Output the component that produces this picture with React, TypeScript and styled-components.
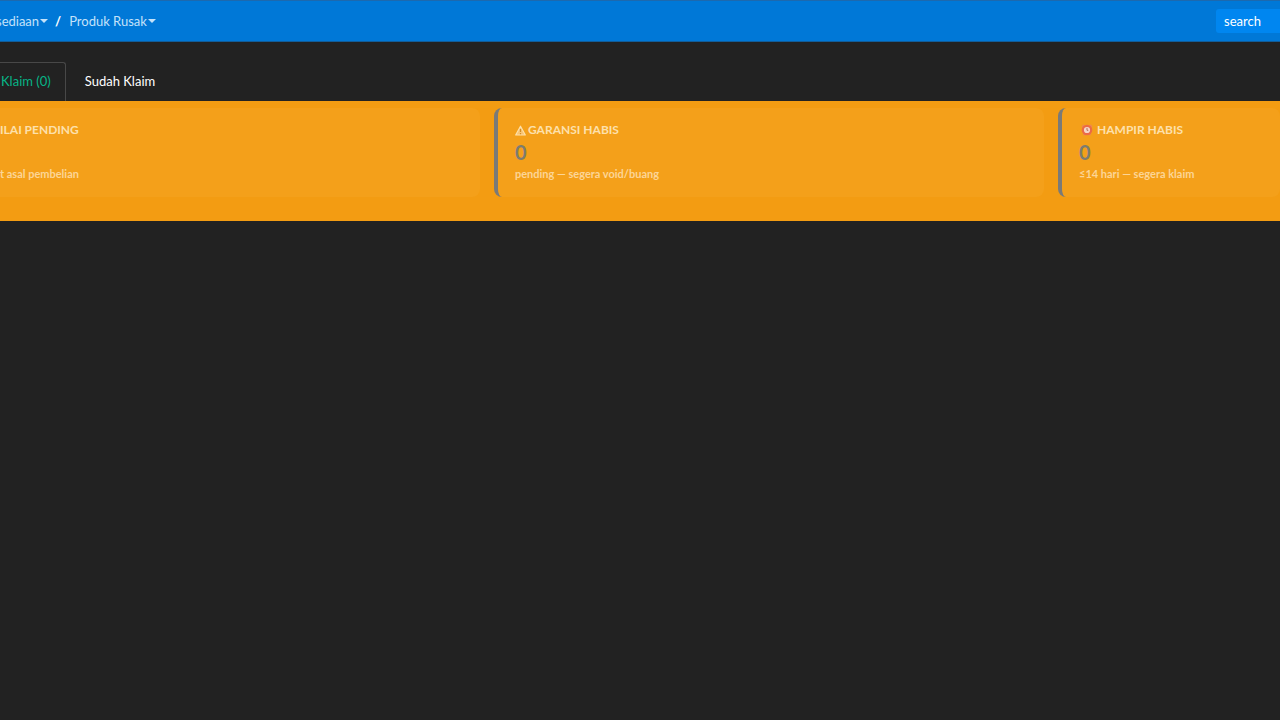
import React from "react";
import styled, { createGlobalStyle } from "styled-components";

const GlobalStyle = createGlobalStyle`
  *, *::before, *::after { box-sizing: border-box; }
  body {
    margin: 0;
    background: #222222;
    color: #ffffff;
    font-family: Lato, "Liberation Sans", sans-serif;
    font-size: 13px;
    line-height: 20px;
    overflow-x: hidden;
  }
`;

const Navbar = styled.header`
  display: flex;
  align-items: center;
  justify-content: space-between;
  height: 42px;
  background: #0078d7;
  border-top: 1px solid #1d69ae;
  border-bottom: 1px solid #125d99;
  overflow: hidden;
`;

const Breadcrumb = styled.nav`
  display: flex;
  align-items: center;
  gap: 7px;
  margin-left: -4px;
`;

const Crumb = styled.a`
  display: flex;
  align-items: center;
  gap: 1px;
  color: #c4e2fa;
  text-decoration: none;
  white-space: nowrap;
`;

const Caret = styled.span`
  border: 4px solid transparent;
  border-top-color: currentColor;
  border-bottom: 0;
`;

const Divider = styled.span`
  padding-right: 1px;
  font-weight: 700;
`;

const Search = styled.input`
  width: 64px;
  height: 24px;
  padding: 0 0 0 8px;
  border: 0;
  border-radius: 3px 0 0 3px;
  background: #0086f0;
  color: #ffffff;
  font: inherit;
  &::placeholder { color: #ffffff; opacity: 1; }
`;

const Tabs = styled.div`
  display: flex;
  gap: 2px;
  padding-top: 20px;
`;

const Tab = styled.button<{ $active?: boolean }>`
  height: 39px;
  padding: 0 16px 2px;
  border: 1px solid ${(p) => (p.$active ? "#484848" : "transparent")};
  border-bottom: 0;
  border-radius: 0 3px 0 0;
  background: transparent;
  color: ${(p) => (p.$active ? "#06b587" : "#ffffff")};
  font: inherit;
  white-space: nowrap;
  &:first-child { padding-left: 1px; padding-right: 14px; border-left: 0; }
`;

const Summary = styled.main`
  display: grid;
  grid-template-columns: 480fr 550fr 222fr;
  gap: 14px;
  padding: 7px 0 24px;
  background: #f39c12;
`;

const Card = styled.section<{ $open?: boolean }>`
  min-width: 0;
  height: 89px;
  padding: 12px 0 0 ${(p) => (p.$open ? "0" : "17px")};
  border-left: ${(p) => (p.$open ? "0" : "4px solid #7a7a78")};
  border-radius: ${(p) => (p.$open ? "0 8px 8px 0" : "8px")};
  background: #f4a01a;
  white-space: nowrap;
`;

const Title = styled.h2`
  display: flex;
  align-items: center;
  gap: 2px;
  height: 20px;
  margin: 0;
  color: #fde0ac;
  font-size: 12px;
  font-weight: 700;
  line-height: 20px;
`;

const Value = styled.div`
  height: 24px;
  color: #7d7c70;
  font-size: 20px;
  font-weight: 700;
  line-height: 24px;
`;

const Note = styled.p`
  margin: 0;
  color: #fcd596;
  font-size: 11px;
  font-weight: 700;
  line-height: 20px;
`;

const WarningIcon = () => (
  <svg width="11" height="11" viewBox="0 0 11 11" aria-hidden="true">
    <path d="M5.5 1.2 10.3 10H.7Z" fill="#f9c575" stroke="#fde0a9" strokeWidth="1.2" strokeLinejoin="round" />
    <path d="M5.5 4v3M5.5 8v1.2" stroke="#d38d24" strokeWidth="1.2" />
  </svg>
);

const AlarmIcon = () => (
  <svg width="16" height="12" viewBox="0 0 16 12" aria-hidden="true">
    <path d="M3 3 5 1M11 1l2 2M4.500 11.200 6 9.700M11.500 11.200 10 9.700" stroke="#ee8b4a" strokeWidth="1.800" />
    <circle cx="8" cy="6" r="4.200" fill="#f5d6c8" stroke="#eb6a46" strokeWidth="2.200" />
    <path d="M8 4v2.300h1.300" fill="none" stroke="#b3705e" strokeWidth="1" />
  </svg>
);

export default function App() {
  return (
    <>
      <GlobalStyle />
      <Navbar>
        <Breadcrumb aria-label="Breadcrumb">
          <Crumb href="#persediaan">sediaan<Caret /></Crumb>
          <Divider>/</Divider>
          <Crumb href="#produk-rusak">Produk Rusak<Caret /></Crumb>
        </Breadcrumb>
        <Search type="text" placeholder="search" aria-label="search" />
      </Navbar>
      <Tabs role="tablist">
        <Tab role="tab" aria-selected="true" $active>Klaim (0)</Tab>
        <Tab role="tab" aria-selected="false">Sudah Klaim</Tab>
      </Tabs>
      <Summary>
        <Card $open>
          <Title>ILAI PENDING</Title>
          <Value />
          <Note>t asal pembelian</Note>
        </Card>
        <Card>
          <Title><WarningIcon />GARANSI HABIS</Title>
          <Value>0</Value>
          <Note>pending — segera void/buang</Note>
        </Card>
        <Card>
          <Title><AlarmIcon />HAMPIR HABIS</Title>
          <Value>0</Value>
          <Note>≤14 hari — segera klaim</Note>
        </Card>
      </Summary>
    </>
  );
}
